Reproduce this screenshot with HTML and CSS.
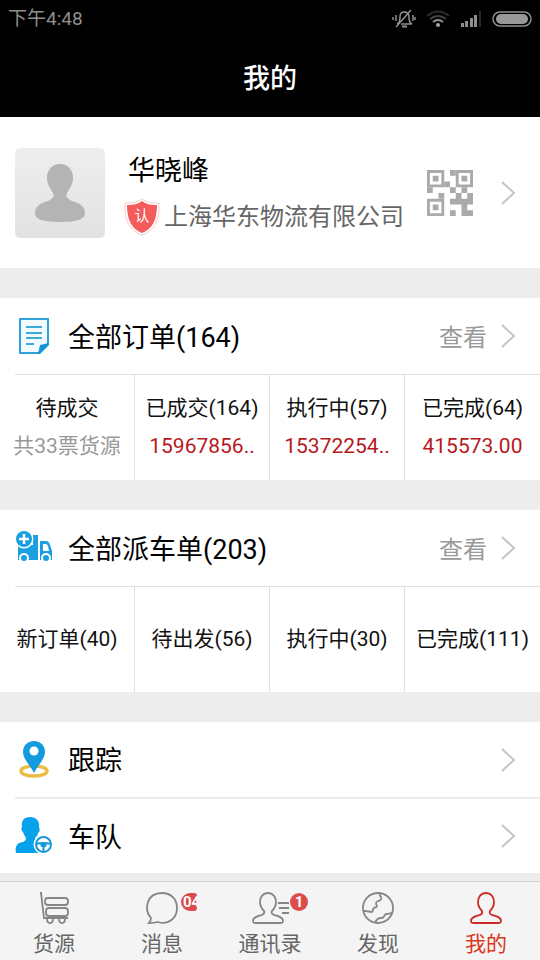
FILE: index.html
```html
<!DOCTYPE html>
<html lang="zh-CN">
<head>
<meta charset="utf-8">
<meta name="viewport" content="width=device-width, initial-scale=1">
<title>我的</title>
<link rel="stylesheet" href="styles.css">
</head>
<body>
<svg class="defs" aria-hidden="true">
  <symbol id="chevron" viewBox="0 0 16 26"><path d="M2 2l12 11L2 24" fill="none" stroke="currentColor" stroke-width="2"/></symbol>
  <symbol id="person" viewBox="0 0 34 34"><path d="M17 2c-5 0-8 4-8 9 0 4 2 7 4 9 1 2 0 3-2 4-4 1-9 2-9 6 0 2 1 2 3 2h24c2 0 3 0 3-2 0-4-5-5-9-6-2-1-3-2-2-4 2-2 4-5 4-9 0-5-3-9-8-9z" fill="none" stroke="currentColor" stroke-width="1.800"/></symbol>
</svg>

<div class="status">
  <span>下午4:48</span>
  <div class="status-icons">
    <svg width="24" height="20" viewBox="0 0 24 20" fill="none" stroke="#8f8f8f" stroke-width="1.5"><path d="M5 15c3-1 3-4 3-7 0-3 1-5 4-5s5 2 5 5c0 3 0 6 3 7H9M4 18L19 1M4 6v6M21 6v6M1 8v3M23 8v3"/><path d="M10 17.500h5" stroke-width="2"/></svg>
    <svg width="24" height="20" viewBox="0 0 24 20" fill="none" stroke-width="2"><path d="M1 7q11-9 22 0" stroke="#2c2c2c"/><path d="M4 10q8-6 16 0" stroke="#444"/><path d="M7 13q5-4 10 0" stroke="#929292"/><circle cx="12" cy="16" r="2" fill="#a5a5a5"/></svg>
    <svg width="22" height="20" viewBox="0 0 22 20" fill="#8f8f8f"><path d="M1 14h3v4H1zM5 12h3v6H5zM10 9h3v9h-3zM14 6h3v12h-3z"/><path d="M19 2h2v16h-2z" fill="#292929"/></svg>
    <svg width="40" height="18" viewBox="0 0 40 18"><rect x="1" y="2" width="38" height="14" rx="7" fill="none" stroke="#8f8f8f" stroke-width="1.500"/><rect x="4" y="4" width="32" height="10" rx="5" fill="#999"/></svg>
  </div>
</div>
<header class="title"><h1>我的</h1></header>

<main>
  <a class="profile" href="#profile">
    <svg class="avatar" viewBox="0 0 90 90" aria-hidden="true">
      <defs>
        <linearGradient id="bg" x1="0" y1="0" x2="0" y2="1"><stop stop-color="#eee"/><stop offset="1" stop-color="#e2e2e2"/></linearGradient>
        <filter id="soft"><feGaussianBlur stdDeviation=".7"/></filter>
      </defs>
      <rect width="90" height="90" rx="5" fill="url(#bg)"/>
      <path filter="url(#soft)" d="M45 16c-8 0-13 6-13 14 0 6 3 10 6 15 2 4-1 6-5 8-7 2-13 5-13 12 0 6 7 9 25 9s25-3 25-9c0-7-6-10-13-12-4-2-7-4-5-8 3-5 6-9 6-15 0-8-5-14-13-14z" fill="#b4b4b4"/>
    </svg>
    <span class="who">
      <span class="name">华晓峰</span>
      <span class="company">
        <span class="verified"><svg width="36" height="38" viewBox="0 0 36 38"><path d="M18 1c4 3 9 4 17 4 1 18-5 28-17 32C6 33 0 23 1 5 9 5 14 4 18 1z" fill="#fff" stroke="#fbc9c9"/><path d="M18 3c4 3 8 4 15 4 0 16-5 24-15 28C8 31 3 23 3 7c7 0 11-1 15-4z" fill="#f45c5c"/></svg><span>认</span></span>
        <span>上海华东物流有限公司</span>
      </span>
    </span>
    <svg class="qr" viewBox="0 0 16 16" fill="#aaa" aria-label="二维码"><path fill-rule="evenodd" d="M0 0h6v6H0zM1 1v4h4V1zM10 0h6v6h-6zM11 1v4h4V1zM0 10h6v6H0zM1 11v4h4v-4z"/><path d="M2 2h2v2H2zM12 2h2v2h-2zM2 12h2v2H2zM8 0h2v2H8zM6 4h2v2H6zM0 6h2v2H0zM8 6h2v2H8zM12 6h2v2h-2zM4 8h2v2H4zM10 8h2v2h-2zM14 8h2v4H8v-2h6zM12 12h2v2h2v2h-4zM8 14h2v2H8z"/></svg>
    <svg class="chevron"><use href="#chevron"/></svg>
  </a>

  <section class="card">
    <a class="row" href="#orders">
      <svg class="icon" viewBox="0 0 38 38"><path d="M5 2h28v25l-9 9H5z" fill="#f2fbff" stroke="#2fa3d6" stroke-width="2"/><path d="M34 26v2l-9 9h-2l2-9z" fill="#1296d4"/><path d="M11 10h16M11 16h16M11 21h16M11 27h8" stroke="#3fa9da" stroke-width="2"/></svg>
      <h2>全部订单(164)</h2><span class="more">查看</span><svg class="chevron"><use href="#chevron"/></svg>
    </a>
    <div class="grid">
      <a href="#o1"><span>待成交</span><span class="muted">共33票货源</span></a>
      <a href="#o2"><span>已成交(164)</span><span class="money">15967856..</span></a>
      <a href="#o3"><span>执行中(57)</span><span class="money">15372254..</span></a>
      <a href="#o4"><span>已完成(64)</span><span class="money">415573.00</span></a>
    </div>
  </section>

  <section class="card">
    <a class="row" href="#dispatch">
      <svg class="icon" viewBox="0 0 38 38"><path d="M3 16h15V6h5v25H3zM25 12h6q3 0 4 4l2 6v9H25z" fill="#1b9fe0"/><path d="M28 15h3q2 0 3 7h-6z" fill="#fff"/><circle cx="9" cy="10" r="9.500" fill="#fff"/><circle cx="9" cy="10" r="8" fill="#1b9fe0"/><path d="M9 5v10M4 10h10" stroke="#fff" stroke-width="2.500"/><g fill="#1b9fe0" stroke="#fff" stroke-width="2"><circle cx="9" cy="29" r="4"/><circle cx="31" cy="29" r="4"/></g></svg>
      <h2>全部派车单(203)</h2><span class="more">查看</span><svg class="chevron"><use href="#chevron"/></svg>
    </a>
    <div class="grid">
      <a href="#d1">新订单(40)</a>
      <a href="#d2">待出发(56)</a>
      <a href="#d3">执行中(30)</a>
      <a href="#d4">已完成(111)</a>
    </div>
  </section>

  <nav class="card list">
    <a class="row" href="#track">
      <svg class="icon" viewBox="0 0 38 38"><ellipse cx="19" cy="30" rx="13" ry="5" fill="none" stroke="#ebbc46" stroke-width="3.500"/><path d="M19 0c-7 0-11 5-11 11 0 7 7 13 11 21 4-8 11-14 11-21 0-6-4-11-11-11z" fill="#149bdf"/><circle cx="19" cy="10" r="4.500" fill="#fff"/></svg>
      <h2>跟踪</h2><svg class="chevron"><use href="#chevron"/></svg>
    </a>
    <a class="row" href="#fleet">
      <svg class="icon" viewBox="0 0 38 38"><path d="M15 0c-6 0-9 4-8 10-1 1-1 4 1 5 1 3 2 4 3 6 0 4-4 4-7 5-3 2-4 5-3 10h28V25c-4 0-9-1-9-4 1-1 3-3 3-5 2-1 2-4 1-6 1-6-3-10-9-10z" fill="#08a2ec"/><circle cx="28.500" cy="27.500" r="10" fill="#fff"/><g fill="none" stroke="#1599d8" stroke-width="2"><circle cx="28.500" cy="27.500" r="7.500"/><path d="M21 27q7-2 15 0M28.500 27v8"/></g><path d="M25 26h7l-1 4h-5z" fill="#1599d8"/></svg>
      <h2>车队</h2><svg class="chevron"><use href="#chevron"/></svg>
    </a>
  </nav>
</main>

<nav class="tabs">
  <a href="#goods"><span class="tab-icon"><svg width="34" height="34" viewBox="0 0 34 34" fill="none" stroke="currentColor" stroke-width="1.800"><path d="M3 2h1l3 25h24"/><rect x="8" y="7" width="23" height="7" rx="3"/><rect x="9" y="17" width="22" height="8" rx="3"/><path d="M10 28q0 4 3 4t3-4M22 28q0 4 3 4t3-4"/></svg></span>货源</a>
  <a href="#messages"><span class="tab-icon"><svg width="34" height="34" viewBox="0 0 34 34" fill="none" stroke="currentColor" stroke-width="1.800"><path d="M4 32q2-2 2-5C-1 19 1 2 17 2c9 0 15 6 15 15 0 12-11 17-19 14q-4 1-9 1z"/></svg><b class="badge cut">04</b></span>消息</a>
  <a href="#contacts"><span class="tab-icon"><svg width="38" height="34" viewBox="0 0 38 34"><use href="#person" width="34" height="34"/><path d="M27 12h11M28 17h10M31 22h7" stroke="currentColor" stroke-width="1.800"/></svg><b class="badge">1</b></span>通讯录</a>
  <a href="#discover"><span class="tab-icon"><svg width="34" height="34" viewBox="0 0 34 34" fill="none" stroke="currentColor" stroke-width="1.800"><circle cx="17" cy="17" r="15"/><path d="M19 2c-1 2 0 3 1 4 1 2-1 4-3 4-3 1-2 3-1 5 0 2-2 1-3 2-2 1 0 4-3 4-2-1-3 0-5-1H3M14 32c1-3 2-5 6-5 3 1 3-3 5-4 3 0 5-1 6-1"/></svg></span>发现</a>
  <a class="active" href="#me" aria-current="page"><span class="tab-icon"><svg width="34" height="34"><use href="#person"/></svg></span>我的</a>
</nav>
</body>
</html>
```
FILE: styles.css
```css
* { box-sizing: border-box; }
body {
  margin: 0;
  min-height: 100vh;
  display: flex;
  flex-direction: column;
  background: #ededed;
  color: #111;
  font: 21px/30px Roboto, "Noto Sans CJK SC", sans-serif;
}
a { color: inherit; text-decoration: none; }
h1, h2 { margin: 0; padding-top: 3px; font-size: 27px; line-height: 38px; font-weight: 400; }
svg { display: block; flex: none; }
.defs { position: absolute; width: 0; height: 0; }

.status {
  display: flex;
  align-items: center;
  justify-content: space-between;
  height: 38px;
  padding: 0 8px;
  background: #000;
  color: #8f8f8f;
  font-size: 19px;
}
.status-icons { display: flex; align-items: center; gap: 10px; }
.title {
  display: flex;
  align-items: center;
  justify-content: center;
  height: 79px;
  background: #000;
  color: #fff;
}
.title h1 { font-weight: 500; }

main { display: flex; flex-direction: column; gap: 30px; }
.profile {
  display: flex;
  align-items: center;
  height: 151px;
  padding: 0 24px 0 15px;
  background: #fff;
}
.avatar { width: 90px; height: 90px; }
.who { display: flex; flex: 1; flex-direction: column; gap: 8px; padding: 2px 0 0 19px; }
.name { padding-left: 4px; color: #000; font-size: 27px; line-height: 38px; }
.company { display: flex; align-items: center; gap: 4px; color: #666; font-size: 24px; line-height: 38px; white-space: nowrap; }
.verified { position: relative; }
.verified span { position: absolute; inset: 0; color: #fff; font-size: 15px; line-height: 36px; text-align: center; }
.qr { width: 46px; height: 46px; }
.chevron { width: 16px; height: 26px; margin-left: 13px; color: #c4c4c4; }
.profile .chevron { margin-left: 27px; }

.card { background: #fff; }
.row {
  display: flex;
  align-items: center;
  height: 76px;
  margin-left: 15px;
  padding-right: 24px;
}
.list .row { height: 75px; }
.list .row + .row { height: 76px; border-top: 2px solid #ebebeb; }
.icon { width: 38px; height: 38px; }
.row h2 { flex: 1; padding-left: 15px; color: #000; }
.more { padding-top: 3px; color: #999; font-size: 24px; }
.grid { display: grid; grid-template-columns: repeat(4, 1fr); position: relative; height: 106px; }
.grid::before { content: ""; position: absolute; top: 0; left: 15px; right: 0; border-top: 1px solid #e0e0e0; }
.grid a {
  display: flex;
  flex-direction: column;
  align-items: center;
  justify-content: center;
  gap: 8px;
  border-right: 1px solid #e0e0e0;
  white-space: nowrap;
}
.grid a:last-child { border-right: 0; }
.muted { color: #999; }
.money { color: #b5191d; }

.tabs {
  display: grid;
  grid-template-columns: repeat(5, 1fr);
  height: 79px;
  margin-top: auto;
  border-top: 1px solid #cfcfcf;
  background: #f4f4f4;
  color: #666;
}
.tabs a { display: flex; flex-direction: column; align-items: center; padding-top: 9px; }
.tab-icon { position: relative; margin-bottom: 4px; color: #868686; }
.active { color: #d9381e; }
.active .tab-icon { color: #cc2a26; }
.badge {
  position: absolute;
  top: 2px;
  left: 39px;
  width: 18px;
  height: 18px;
  overflow: hidden;
  border-radius: 9px;
  background: #dc4c4c;
  color: #fff;
  font-size: 15px;
  line-height: 18px;
  text-align: center;
}
.cut { left: 36px; width: 16px; padding-left: 2px; border-radius: 9px 3px 3px 9px; text-align: left; }
```
